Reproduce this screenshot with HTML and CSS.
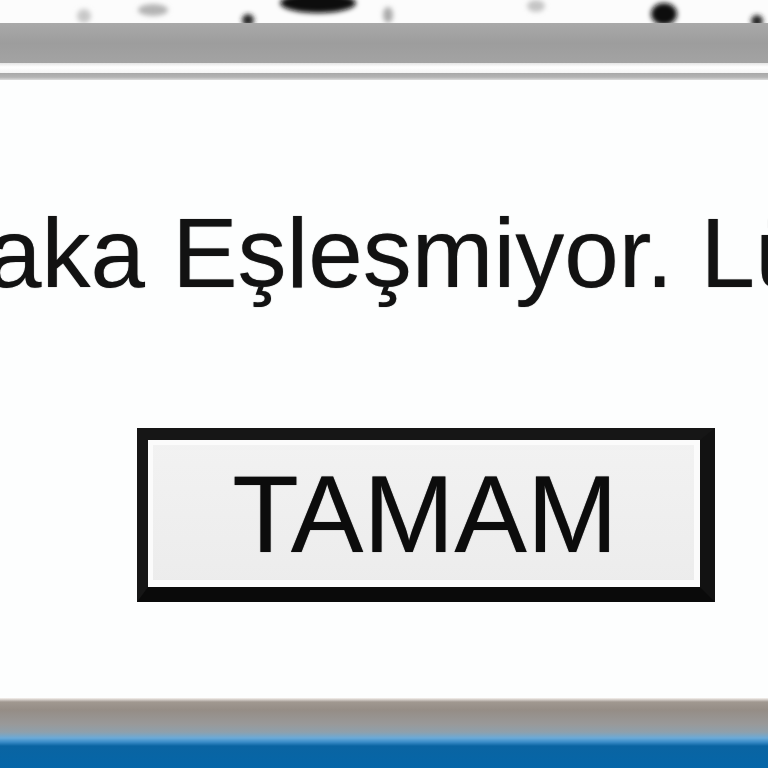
FILE: index.html
```html
<!DOCTYPE html>
<html lang="tr">
<head>
<meta charset="utf-8">
<title>Uyarı</title>
<link rel="stylesheet" href="styles.css">
</head>
<body>
<div class="screen">
  <div class="top-strip">
    <svg class="marks" width="768" height="23" viewBox="0 0 768 23" aria-hidden="true">
      <defs>
        <filter id="soft" x="-50%" y="-50%" width="200%" height="200%">
          <feGaussianBlur stdDeviation="2.6"/>
        </filter>
      </defs>
      <g filter="url(#soft)">
        <ellipse cx="84" cy="16" rx="7" ry="7" fill="#c8c8c8"/>
        <ellipse cx="153" cy="10" rx="15" ry="6" fill="#b4b4b4"/>
        <ellipse cx="248" cy="20" rx="6" ry="6" fill="#222"/>
        <ellipse cx="318" cy="3" rx="38" ry="10" fill="#0a0a0a"/>
        <ellipse cx="388" cy="15" rx="5" ry="8" fill="#aaa"/>
        <ellipse cx="536" cy="6" rx="9" ry="6" fill="#c4c4c4"/>
        <ellipse cx="664" cy="14" rx="13" ry="11" fill="#111"/>
        <ellipse cx="757" cy="21" rx="6" ry="6" fill="#222"/>
      </g>
    </svg>
  </div>
  <div class="titlebar"></div>
  <div class="gap"></div>
  <div class="rule"></div>
  <main class="content">
    <p class="message">aka Eşleşmiyor. Lütfen tekrar deneyin.</p>
    <div class="actions">
      <button class="btn" type="button">TAMAM</button>
    </div>
  </main>
  <div class="taskbar"></div>
</div>
</body>
</html>
```

FILE: styles.css
```css
html, body {
  margin: 0;
  padding: 0;
  background: #fdfefe;
}

.screen {
  width: 768px;
  height: 768px;
  overflow: hidden;
  display: flex;
  flex-direction: column;
  font-family: "Liberation Sans", Arial, sans-serif;
  background: #fdfefe;
}

.top-strip {
  height: 23px;
  flex: none;
  background: #fcfcfc;
}

.marks {
  display: block;
}

.titlebar {
  height: 40px;
  flex: none;
  background: linear-gradient(to bottom, #a9a9a9 0%, #9d9d9d 50%, #a3a3a3 100%);
}

.gap {
  height: 10px;
  flex: none;
  background: linear-gradient(to bottom, #e4e4e4 0%, #ffffff 40%, #f4f4f4 100%);
}

.rule {
  height: 7px;
  flex: none;
  background: linear-gradient(to bottom, #a8a8a8 0%, #b4b4b4 60%, #dcdcdc 100%);
}

.content {
  flex: 1;
  display: flex;
  flex-direction: column;
  background: #fdfefe;
  padding-top: 117px;
}

.message {
  margin: 0 0 0 -13px;
  font-size: 98px;
  color: #121212;
  white-space: nowrap;
  line-height: normal;
  text-shadow: 0 0 1px rgba(0, 0, 0, 0.6);
}

.actions {
  display: flex;
  padding-top: 118px;
  padding-left: 137px;
}

.btn {
  box-sizing: border-box;
  width: 578px;
  height: 174px;
  padding: 0 0 0 2px;
  margin: 0;
  border-style: solid;
  border-color: #161616 #121212 #0a0a0a #161616;
  border-width: 12px 15px 15px 11px;
  background: linear-gradient(to bottom, #f2f2f2 0%, #ececec 100%);
  box-shadow: inset 5px 5px 0 #fbfbfb, inset -6px -7px 0 #fbfbfb;
  font-family: "Liberation Sans", Arial, sans-serif;
  font-size: 109px;
  color: #0c0c0c;
  line-height: normal;
  text-align: center;
  text-shadow: 0 0 1px rgba(0, 0, 0, 0.6);
}

.taskbar {
  height: 70px;
  flex: none;
  background: linear-gradient(to bottom,
    #f6f2ee 0px,
    #a09890 4px,
    #958d86 12px,
    #999999 26px,
    #8fa0ab 34px,
    #6aaad8 40px,
    #3a8cc8 44px,
    #0a64a2 48px,
    #0566a8 70px);
}
```
